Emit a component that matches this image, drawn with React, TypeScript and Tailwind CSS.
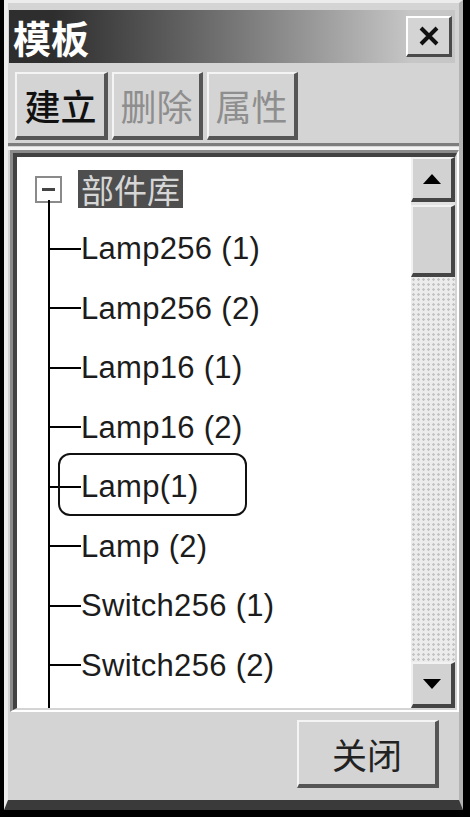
import React from 'react';

const items = [
  'Lamp256 (1)',
  'Lamp256 (2)',
  'Lamp16 (1)',
  'Lamp16 (2)',
  'Lamp(1)',
  'Lamp (2)',
  'Switch256 (1)',
  'Switch256 (2)',
];

const cjk = "font-['Noto_Sans_CJK_SC',sans-serif]";

const App = () => {
  return (
    <main className="w-[470px] h-[817px] bg-black pl-[4px] pr-[7px] pb-[7px] font-['Liberation_Sans',sans-serif]">
      <div className="h-full flex flex-col bg-[#d4d4d4] border-l-4 border-t-[3px] border-[#ececec] border-r-4 border-r-[#b4b4b4] border-b-[10px] border-b-[#3a3a3a]">
        {/* Title bar */}
        <div className="mt-[7px] ml-[1px] mr-[4px] h-[53px] flex items-center justify-between bg-linear-to-r from-[#2e2e2e] from-10% to-[#c6c6c6] to-90%">
          <span className={`${cjk} pl-[4px] text-[38px] leading-none font-bold text-white`}>模板</span>
          <button className="mr-[3px] w-[46px] h-[41px] flex items-center justify-center bg-[#d4d4d4] border-t-2 border-l-2 border-white border-b-[3px] border-r-[3px] border-b-[#4a4a4a] border-r-[#4a4a4a]">
            <svg width="22" height="20" viewBox="0 0 22 20">
              <path d="M3 2 L19 18 M19 2 L3 18" stroke="#111" strokeWidth="4" />
            </svg>
          </button>
        </div>

        {/* Toolbar */}
        <div className="mt-[9px] pl-[7px] h-[68px] flex gap-[4px]">
          <button className={`${cjk} w-[93px] h-full bg-[#d4d4d4] border-t-2 border-l-2 border-[#f4f4f4] border-b-4 border-r-4 border-b-[#555] border-r-[#555] text-[36px] leading-none font-medium text-[#111]`}>
            建立
          </button>
          <button className={`${cjk} w-[91px] h-full bg-[#d4d4d4] border-t-2 border-l-2 border-[#f4f4f4] border-b-4 border-r-4 border-b-[#555] border-r-[#555] text-[36px] leading-none text-[#8e8e8e]`}>
            删除
          </button>
          <button className={`${cjk} w-[91px] h-full bg-[#d4d4d4] border-t-2 border-l-2 border-[#f4f4f4] border-b-4 border-r-4 border-b-[#555] border-r-[#555] text-[36px] leading-none text-[#8e8e8e]`}>
            属性
          </button>
        </div>

        {/* Separator */}
        <div className="mt-[3px] h-[7px] border-t-[3px] border-[#7c7c7c] border-b-[3px] border-b-[#f2f2f2]" />

        {/* Tree box */}
        <div className="ml-[2px] h-[562px] flex border-t-[3px] border-l-[3px] border-[#8a8a8a] border-b-2 border-r-2 border-b-white border-r-white">
          <div className="flex-1 flex border-t-4 border-l-4 border-[#424242] border-b-2 border-r-2 border-b-[#d4d4d4] border-r-[#d4d4d4]">
            <div className="flex-1 bg-white flex flex-col overflow-hidden">
              {/* Root node */}
              <div className="pt-[13px] pl-[18px] h-[51px] flex items-end">
                <div className="h-[38px] flex items-center gap-[16px]">
                  <div className="w-[27px] h-[27px] border-2 border-[#8a8a8a] flex items-center justify-center">
                    <div className="w-[13px] h-[3px] bg-[#444]" />
                  </div>
                  <span className={`${cjk} h-[38px] px-[3px] flex items-center bg-[#4e4e4e] text-[33px] leading-none text-[#d6d6d6]`}>部件库</span>
                </div>
              </div>

              {/* Children */}
              <div className="flex-1 ml-[31px] -mt-[8px] pt-[19px] border-l-2 border-black">
                {items.map((label, i) => (
                  <div key={label} className="relative h-[59.5px] flex items-center">
                    <div className="w-[31px] h-[2px] bg-black" />
                    <span className="text-[31px] leading-none text-[#1c1c1c] tracking-[0.3px]">{label}</span>
                    {i === 4 && (
                      <div className="absolute left-[8px] top-[-4px] w-[189px] h-[63px] border-2 border-[#111] rounded-[12px]" />
                    )}
                  </div>
                ))}
              </div>
            </div>

            {/* Scrollbar */}
            <div className="w-[44px] flex flex-col bg-[#e2e2e2]">
              <div className="h-[45px] flex items-center justify-center bg-[#d2d2d2] border-t-2 border-l-2 border-[#f2f2f2] border-b-4 border-r-4 border-b-[#444] border-r-[#444]">
                <svg width="18" height="10" viewBox="0 0 18 10">
                  <path d="M9 0 L18 10 L0 10 Z" fill="#000" />
                </svg>
              </div>
              <div className="mt-[3px] h-[72px] bg-[#d2d2d2] border-t-2 border-l-2 border-[#f2f2f2] border-b-4 border-r-4 border-b-[#444] border-r-[#444]" />
              <div className="flex-1 bg-[#ececec] bg-[radial-gradient(#c4c4c4_1px,transparent_1.5px)] bg-size-[5px_5px]" />
              <div className="h-[46px] flex items-center justify-center bg-[#d2d2d2] border-t-2 border-l-2 border-[#f2f2f2] border-b-4 border-r-4 border-b-[#444] border-r-[#444]">
                <svg width="18" height="10" viewBox="0 0 18 10">
                  <path d="M0 0 L18 0 L9 10 Z" fill="#000" />
                </svg>
              </div>
            </div>
          </div>
        </div>

        {/* Footer */}
        <div className="mt-[8px] flex justify-end pr-[20px]">
          <button className={`${cjk} w-[142px] h-[68px] bg-[#d4d4d4] border-t-2 border-l-2 border-[#f4f4f4] border-b-4 border-r-4 border-b-[#555] border-r-[#555] text-[35px] leading-none text-[#222]`}>
            关闭
          </button>
        </div>
      </div>
    </main>
  );
};

export default App;
